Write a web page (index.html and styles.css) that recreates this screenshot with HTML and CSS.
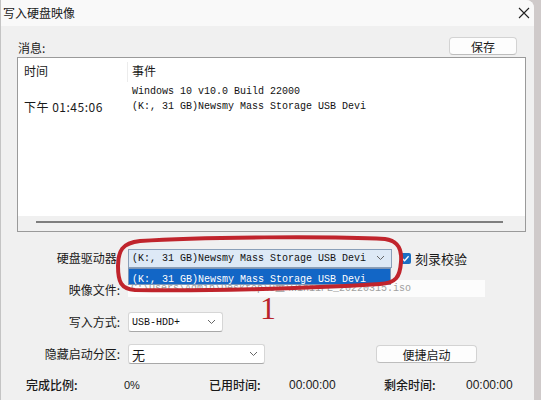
FILE: index.html
```html
<!DOCTYPE html>
<html lang="zh-CN">
<head>
<meta charset="UTF-8">
<title>写入硬盘映像</title>
<link rel="stylesheet" href="styles.css">
</head>
<body>
<div class="window">
  <div class="titlebar">
    <span class="title">写入硬盘映像</span>
    <svg class="close" width="12" height="12" viewBox="0 0 12 12"><path d="M1 1 L11 11 M11 1 L1 11" stroke="#222" stroke-width="1.1" fill="none"/></svg>
  </div>
  <div class="content">
    <div class="msg-head">
      <span class="msg-label">消息:</span>
      <button class="btn save">保存</button>
    </div>
    <div class="listbox">
      <div class="list-row head"><span class="col-time">时间</span><span class="col-event">事件</span></div>
      <div class="list-row"><span class="col-time"></span><span class="col-event mono">Windows 10 v10.0 Build 22000</span></div>
      <div class="list-row"><span class="col-time time">下午 01:45:06</span><span class="col-event mono">(K:, 31 GB)Newsmy Mass Storage USB Devi</span></div>
      <div class="list-fill"></div>
      <div class="hscroll"><div class="thumb"></div></div>
    </div>

    <div class="form">
      <label class="lbl">硬盘驱动器:</label>
      <div class="field-row">
        <div class="combo focused wide">
          <span class="mono">(K:, 31 GB)Newsmy Mass Storage USB Devi</span>
          <svg class="arrow" width="9" height="6" viewBox="0 0 9 6"><path d="M1 1 L4.5 4.5 L8 1" stroke="#666" stroke-width="1" fill="none"/></svg>
          <div class="dropdown"><span class="mono">(K:, 31 GB)Newsmy Mass Storage USB Devi</span></div>
        </div>
        <span class="check"><svg width="11" height="11" viewBox="0 0 11 11"><path d="M2.5 5.8 L4.6 7.8 L8.6 3.2" stroke="#fff" stroke-width="1.3" fill="none"/></svg></span>
        <span class="check-label">刻录校验</span>
      </div>

      <label class="lbl">映像文件:</label>
      <div class="field-row top">
        <div class="textbox mono">C:\Users\Admin\Desktop\U盘\Win11PE_20220315.iso</div>
      </div>

      <label class="lbl">写入方式:</label>
      <div class="field-row">
        <div class="combo mode">
          <span class="mono">USB-HDD+</span>
          <svg class="arrow" width="9" height="6" viewBox="0 0 9 6"><path d="M1 1 L4.5 4.5 L8 1" stroke="#666" stroke-width="1" fill="none"/></svg>
        </div>
      </div>

      <label class="lbl">隐藏启动分区:</label>
      <div class="field-row">
        <div class="combo hide">
          <span>无</span>
          <svg class="arrow" width="9" height="6" viewBox="0 0 9 6"><path d="M1 1 L4.5 4.5 L8 1" stroke="#666" stroke-width="1" fill="none"/></svg>
        </div>
        <button class="btn quick">便捷启动</button>
      </div>
    </div>

    <div class="stats">
      <span class="stat-label">完成比例:</span>
      <span class="stat-val small">0%</span>
      <span class="stat-label">已用时间:</span>
      <span class="stat-val">00:00:00</span>
      <span class="stat-label">剩余时间:</span>
      <span class="stat-val">00:00:00</span>
    </div>
  </div>

  <!-- hand drawn annotation -->
  <svg class="loop" width="541" height="400" viewBox="0 0 541 400">
    <path d="M140 241 C200 237 330 236 385 239 C399 241 402 250 401 262 C400 277 396 283 380 284 C300 289 200 291 135 290 C121 289 118 282 118 266 C118 251 122 243 140 241 Z" stroke="#c0242c" stroke-width="4" fill="none"/>
  </svg>
  <span class="mark-num">1</span>
</div>
</body>
</html>
```

FILE: styles.css
```css
* {
  box-sizing: border-box;
}
body {
  margin: 0;
  width: 541px;
  height: 400px;
  background: #cfcaca;
  font-family: "Noto Sans CJK SC", "Liberation Sans", sans-serif;
  font-size: 12px;
  color: #1a1a1a;
  overflow: hidden;
}
.window {
  position: relative;
  width: 534px;
  height: 400px;
  background: #f0f0f0;
  border-left: 1px solid #c4c4c4;
  border-top-right-radius: 8px;
  overflow: hidden;
}
.titlebar {
  height: 26px;
  background: #f9f9f9;
  display: flex;
  align-items: center;
  justify-content: space-between;
  padding: 0 4px 0 2px;
}
.title {
  font-size: 12px;
  line-height: 14px;
}
.close {
  margin-top: -1px;
}
.content {
  padding: 0 8px 0 16px;
}
.msg-head {
  height: 31px;
  display: flex;
  align-items: flex-end;
  justify-content: space-between;
  padding-bottom: 2px;
}
.msg-label {
  line-height: 14px;
  padding-left: 1px;
}
.btn {
  font-family: "Noto Sans CJK SC", sans-serif;
  font-size: 12px;
  color: #1a1a1a;
  background: #fdfdfd;
  border: 1px solid #d3d3d3;
  border-bottom-color: #bdbdbd;
  border-radius: 4px;
  height: 18px;
  padding: 0;
  line-height: 15px;
}
.save {
  width: 68px;
  margin-right: 9px;
}
.listbox {
  height: 175px;
  background: #fff;
  border: 1px solid #9a9a9a;
  display: flex;
  flex-direction: column;
}
.list-row {
  display: flex;
  height: 15px;
  line-height: 15px;
}
.list-row.head {
  height: 24px;
  line-height: 18px;
  padding-top: 4px;
  margin-bottom: 2px;
}
.col-time {
  width: 110px;
  padding-left: 6px;
  border-right: 1px solid transparent;
}
.col-time.time {
  letter-spacing: 0.5px;
}
.head .col-time {
  border-right-color: #ececec;
}
.col-event {
  padding-left: 4px;
}
.mono {
  font-family: "Liberation Mono", monospace;
  font-size: 10px;
  color: #111;
  white-space: nowrap;
}
.list-fill {
  flex: 1;
}
.hscroll {
  height: 15px;
  background: #f0f0f0;
  padding: 5px 22px 0 18px;
}
.thumb {
  height: 2px;
  background: #7e7e7e;
}
.form {
  margin-top: 16px;
  display: grid;
  grid-template-columns: 103px 1fr;
  column-gap: 8px;
  grid-auto-rows: 20px;
  row-gap: 12px;
}
.lbl {
  text-align: right;
  line-height: 20px;
  white-space: nowrap;
}
.field-row {
  display: flex;
  align-items: center;
}
.field-row.top {
  align-items: flex-start;
}
.combo {
  position: relative;
  height: 20px;
  background: #fff;
  border: 1px solid #d6d6d6;
  border-bottom-color: #a8a8a8;
  border-radius: 3px;
  display: flex;
  align-items: center;
  justify-content: space-between;
  padding: 0 6px 0 3px;
}
.combo.wide {
  width: 264px;
  height: 19px;
}
.combo.focused {
  background: #dde9f6;
  border-color: #8a9fb8;
  border-radius: 0;
}
.combo.mode {
  width: 95px;
}
.combo.hide {
  width: 137px;
  font-size: 13px;
}
.dropdown {
  position: absolute;
  top: 18px;
  left: -1px;
  width: 263px;
  height: 17px;
  background: #1266c6;
  border: 1px solid #7d95b5;
  padding-left: 3px;
  line-height: 15px;
}
.dropdown .mono {
  color: #fff;
}
.check {
  width: 11px;
  height: 11px;
  margin-left: 8px;
  background: #1a6fc4;
  border-radius: 2px;
  display: flex;
}
.check-label {
  margin-left: 4px;
  font-size: 13px;
}
.textbox {
  width: 357px;
  height: 17px;
  background: #fcfcfc;
  line-height: 15px;
  padding: 1px 0 0 3px;
  overflow: hidden;
}
.textbox.mono {
  color: #a0a0a0;
}
.quick {
  width: 101px;
  margin-left: 111px;
}
.stats {
  margin-top: 13px;
  padding-left: 9px;
  display: grid;
  grid-template-columns: 98px 85px 80px 95px 82px auto;
  line-height: 16px;
}
.stat-label {
  font-weight: 500;
}
.stat-val {
  font-family: "Liberation Sans", sans-serif;
  font-size: 12px;
}
.stat-val.small {
  font-size: 11px;
}
.loop {
  position: absolute;
  left: -1px;
  top: 0;
  pointer-events: none;
}
.mark-num {
  position: absolute;
  left: 259px;
  top: 297px;
  font-family: "Liberation Serif", serif;
  font-size: 32px;
  line-height: 22px;
  color: #b8232a;
}
```
